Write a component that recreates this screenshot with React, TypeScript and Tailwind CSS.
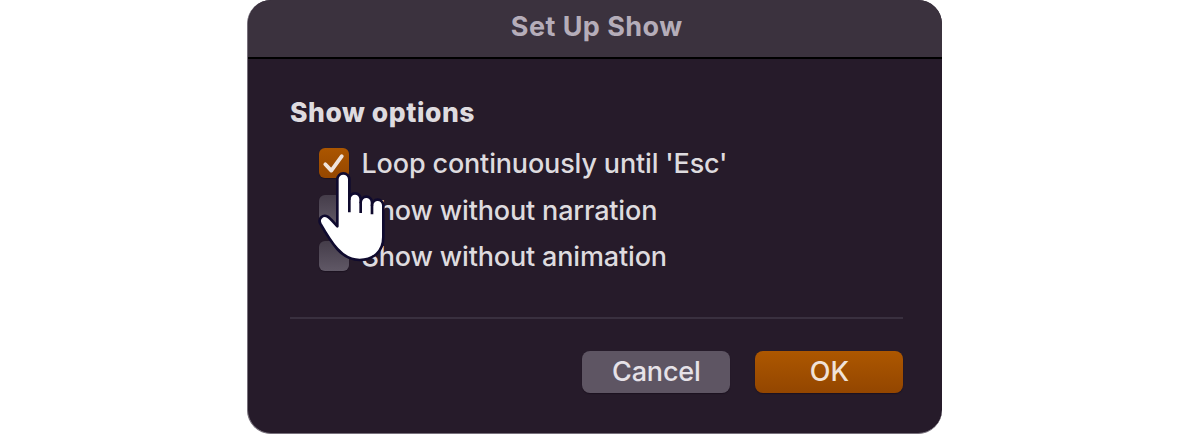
interface ShowOption {
  label: string
  checked: boolean
}

const options: ShowOption[] = [
  { label: "Loop continuously until 'Esc'", checked: true },
  { label: 'Show without narration', checked: false },
  { label: 'Show without animation', checked: false },
]

function Checkbox({ checked }: { checked: boolean }) {
  return (
    <span
      className={`block h-[30px] w-[30px] rounded-[6px] shadow-[0_1px_1px_#1c1220] ${
        checked ? 'bg-linear-to-b from-[#ab5600] to-[#954700]' : 'bg-linear-to-b from-[#453d4a] to-[#605866]'
      }`}
    >
      {checked && (
        <svg viewBox="0 0 30 30" className="h-full w-full" fill="none">
          <path d="M6.3 16.3 L12.3 22.6 L22.8 8.2" stroke="#f0e4dc" strokeWidth="3.8" strokeLinecap="round" strokeLinejoin="round" />
        </svg>
      )}
    </span>
  )
}

function HandPointer() {
  return (
    <svg viewBox="54 108 204 276" className="absolute -left-px top-[23px] h-[92px] w-[68px]" fill="none">
      <path
        d="M112 274 V133 A18 18 0 0 1 148 133 V192 A17 17 0 0 1 182 192 V202 A17 17 0 0 1 216 202 V211 A17 17 0 0 1 250 211 V306 C250 350 220 374 179 375 C150 375 130 362 112 342 C92 320 77 294 61 266 C53 250 69 237 83 245 C91 250 103 265 112 274 Z"
        fill="#fff"
        stroke="#0f0a2e"
        strokeWidth="8"
        strokeLinejoin="round"
      />
      <path d="M148 190 V232 M182 200 V234 M216 209 V238" stroke="#0f0a2e" strokeWidth="8" />
    </svg>
  )
}

export default function App() {
  return (
    <div className="h-[434px] bg-white pl-[247.4px] font-['Inter',sans-serif]">
      <div className="flex h-[433.5px] w-[694.6px] flex-col overflow-hidden rounded-[24px] border-b border-l border-[#77707b] bg-[#261b2a]">
        <header className="flex h-[59px] shrink-0 items-center justify-center border-b-2 border-black bg-[#3b323e] pb-1 pl-[3px]">
          <h1 className="text-[27px] font-bold leading-8 tracking-[0.45px] text-[#b5adb9]">Set Up Show</h1>
        </header>

        <main className="flex flex-1 flex-col pl-[41.6px] pr-[38.6px] pt-[37px]">
          <h2 className="text-[26.5px] font-extrabold leading-8 tracking-[0.55px] text-[#dedbdf]">Show options</h2>

          <div className="relative ml-[29.5px] mt-[20px] flex flex-col gap-[16.6px]">
            {options.map((o) => (
              <label key={o.label} className="flex h-[30px] items-center gap-[12px]">
                <Checkbox checked={o.checked} />
                <span className="mt-[1.9px] whitespace-nowrap text-[27px] font-[450] leading-[30px] tracking-[-0.16px] text-[#dedbdf]">
                  {o.label}
                </span>
              </label>
            ))}
            <HandPointer />
          </div>

          <div className="mt-[45.8px] h-[2px] shrink-0 bg-[#39303f]" />

          <div className="mt-[32px] flex justify-end gap-[25px]">
            <button className="h-[42px] w-[148px] rounded-[8px] bg-[#5e5563] text-[27px] font-[450] leading-[40px] tracking-[-0.16px] text-[#e6e2e8] shadow-[0_1px_1px_#1c1220]">
              Cancel
            </button>
            <button className="h-[42px] w-[148px] rounded-[8px] bg-linear-to-b from-[#ad5700] to-[#934600] text-[27px] font-[450] leading-[40px] text-[#f0e2d8] shadow-[0_1px_1px_#1c1220]">
              OK
            </button>
          </div>
        </main>
      </div>
    </div>
  )
}
